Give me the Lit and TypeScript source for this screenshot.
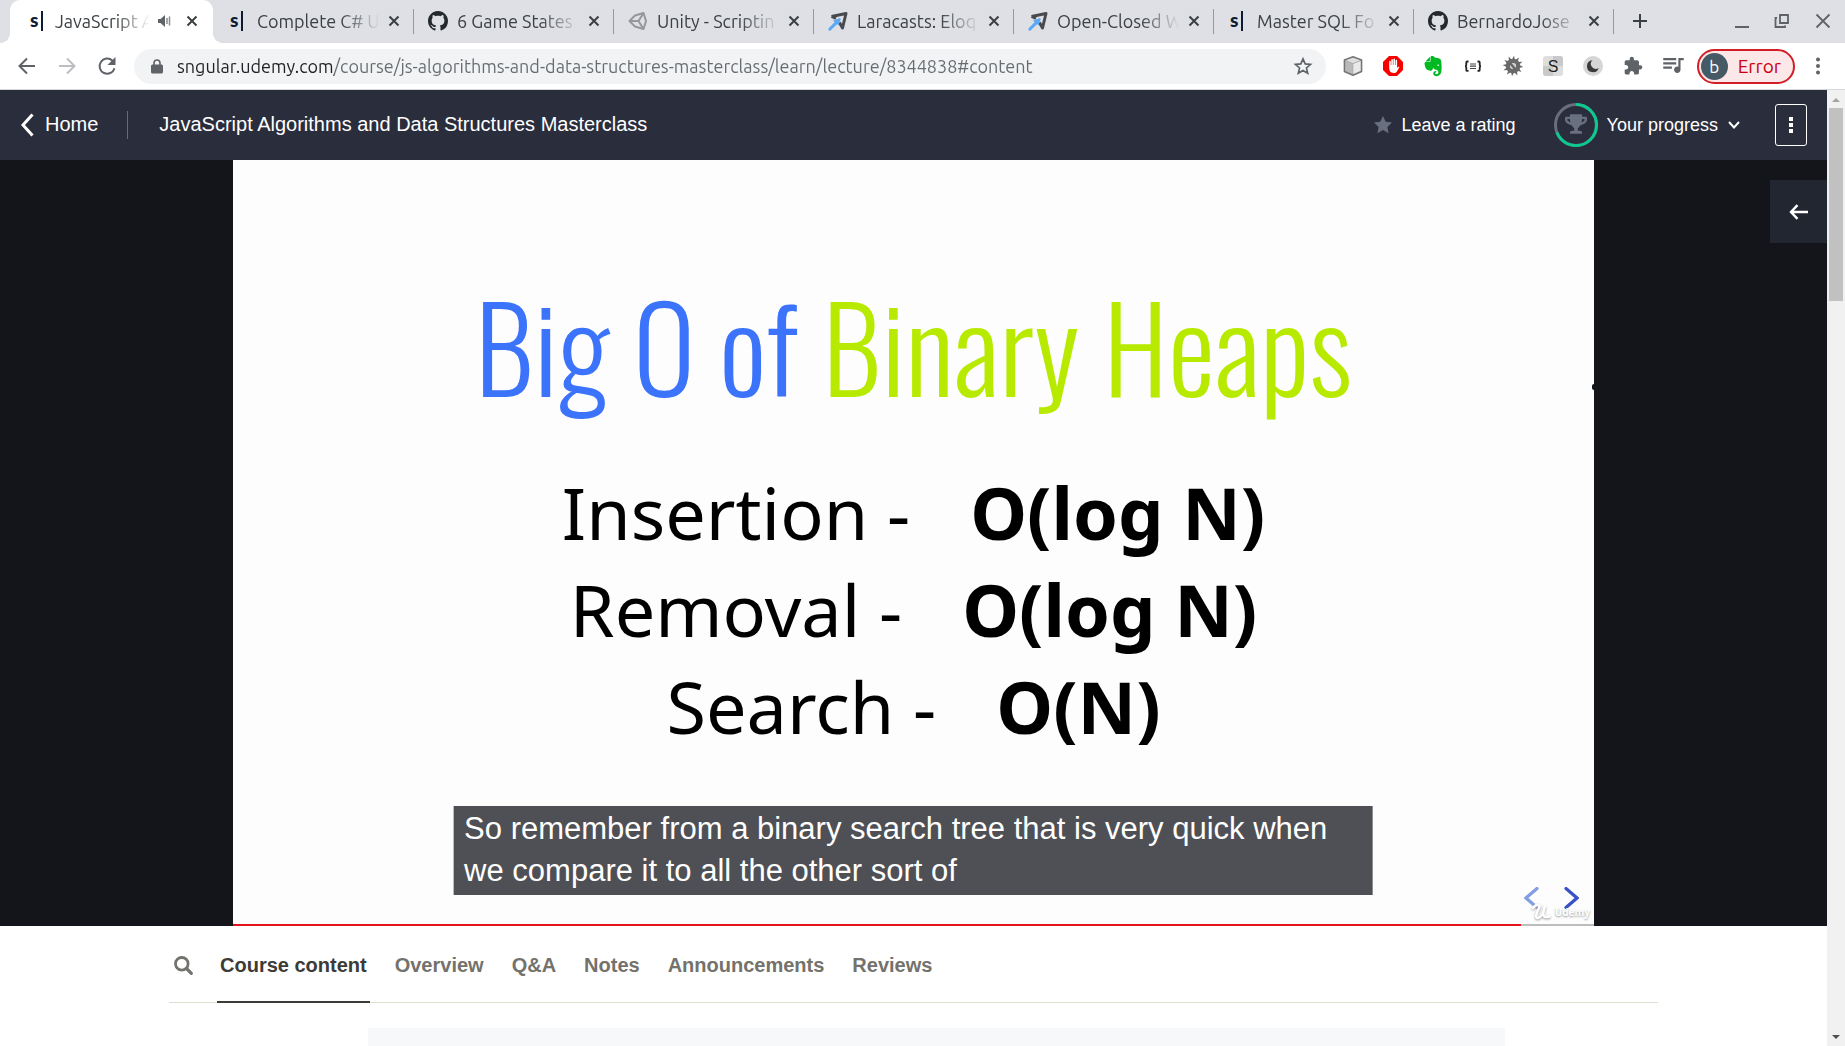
import { LitElement, html, css, svg, nothing, TemplateResult } from "lit";
import { customElement, state } from "lit/decorators.js";
import { classMap } from "lit/directives/class-map.js";

const githubMark = html`<svg class="favicon" viewBox="0 0 16 16" aria-hidden="true"><path fill="#24292e" d="M8 0C3.58 0 0 3.58 0 8c0 3.54 2.29 6.53 5.47 7.59.4.07.55-.17.55-.38 0-.19-.01-.82-.01-1.49-2.01.37-2.53-.49-2.69-.94-.09-.23-.48-.94-.82-1.13-.28-.15-.68-.52-.01-.53.63-.01 1.08.58 1.23.82.72 1.21 1.87.87 2.33.66.07-.52.28-.87.51-1.07-1.78-.2-3.64-.89-3.64-3.95 0-.87.31-1.59.82-2.15-.08-.2-.36-1.02.08-2.12 0 0 .67-.21 2.2.82.64-.18 1.32-.27 2-.27s1.36.09 2 .27c1.53-1.04 2.2-.82 2.2-.82.44 1.1.16 1.92.08 2.12.51.56.82 1.27.82 2.15 0 3.07-1.87 3.75-3.65 3.95.29.25.54.73.54 1.48 0 1.07-.01 1.93-.01 2.2 0 .21.15.46.55.38A8.01 8.01 0 0 0 16 8c0-4.42-3.58-8-8-8z"/></svg>`;
const unityMark = html`<svg class="favicon" viewBox="0 0 20 20" aria-hidden="true"><g fill="none" stroke="#96979a" stroke-width="2" stroke-linejoin="round"><path d="M7 4.500 15.500 2 18 10 15.500 18 7 15.500 1.500 10z"/><path d="M1.500 10H10.500M10.500 10 15.500 2M10.500 10 15.500 18"/></g></svg>`;
const laracastsMark = html`<svg class="favicon" viewBox="0 0 20 20" aria-hidden="true"><path d="M3.500 5.500 18 2.500 14.500 17 11.500 11.500M3.500 5.500 8 7.500" fill="none" stroke="#474a4f" stroke-width="3" stroke-linejoin="round"/><path d="M5 9.500 12.500 7 10.500 14.500" fill="#5aa9f5"/><path d="M11 9 1.800 18.200" stroke="#5aa9f5" stroke-width="3" stroke-dasharray="9 1.500" stroke-linecap="round"/></svg>`;
const sMark = html`<span class="favicon smark" aria-hidden="true">s</span>`;
const closeIcon = html`<svg width="12" height="12" viewBox="0 0 12 12" aria-hidden="true"><path d="M1.500 1.500 10.500 10.500M10.500 1.500 1.500 10.500" stroke="#3c4043" stroke-width="2"/></svg>`;

interface BrowserTab { title: string; mark: TemplateResult; active?: boolean; }

const browserTabs: BrowserTab[] = [
  { title: "JavaScript A", mark: sMark, active: true },
  { title: "Complete C# U", mark: sMark },
  { title: "6 Game States", mark: githubMark },
  { title: "Unity - Scriptin", mark: unityMark },
  { title: "Laracasts: Eloq", mark: laracastsMark },
  { title: "Open-Closed W", mark: laracastsMark },
  { title: "Master SQL Fo", mark: sMark },
  { title: "BernardoJose", mark: githubMark },
];

const gearTeeth = Array.from({ length: 12 }, (_, i) => i * 30);

const extensions: { label: string; art: TemplateResult }[] = [
  { label: "Package viewer", art: svg`<path d="M10 .8 18.600 4v11.500L10 19.300 1.400 15.500V4z" fill="#a9a9a9" stroke="#757575" stroke-width="1.500" stroke-linejoin="round"/><path d="M2.500 5 9.500 8v10L2.500 14.800z" fill="#b9b9b9"/><path d="M3 4.300 10 1.800l7 2.500-7 3z" fill="#dedede"/><path d="M10.300 8 17.600 5v9.800L10.300 18z" fill="#e9e9e9"/>` },
  { label: "Ad blocker", art: svg`<path d="M6 0h8l6 6v8l-6 6H6l-6-6V6z" fill="#f70000"/><path d="M6.200 11V5.800c0-1.300 1.600-1.300 1.600 0V9h.5V4c0-1.300 1.600-1.300 1.600 0v5h.5V3.400c0-1.300 1.600-1.300 1.600 0V9h.5V4.800c0-1.300 1.600-1.300 1.600 0V12c.7-1.200 1.600-1.700 2.300-1l-2.600 4.700c-1 1.600-5.400 1.700-6.600-.2C6.300 14 6.200 12.500 6.200 11z" fill="#fff"/>` },
  { label: "Note clipper", art: svg`<path transform="scale(.84)" fill="#00b821" d="M8.222 5.393c0 .239-.02.637-.256.895-.257.24-.652.259-.888.259H4.552c-.73 0-1.165 0-1.46.04-.159.02-.356.1-.455.14-.04.019-.04 0-.02-.02L8.380.796c.02-.02.04-.02.02.02-.04.099-.118.298-.138.457-.04.298-.04.736-.04 1.472v2.647zm5.348 17.869c-.67-.438-1.026-1.015-1.164-1.373a2.924 2.924 0 01-.217-1.095 3.007 3.007 0 013-3.004c.493 0 .888.398.888.895a.88.88 0 01-.454.776c-.099.06-.237.1-.336.12-.098.02-.473.06-.65.218-.198.16-.356.418-.356.697 0 .298.118.577.316.776.355.358.829.557 1.342.557a2.436 2.436 0 002.427-2.447c0-1.214-.809-2.290-1.875-2.766-.158-.08-.414-.14-.651-.2a8.040 8.040 0 00-.592-.1c-.829-.1-2.901-.755-3.040-2.605 0 0-.611 2.785-1.835 3.540-.118.06-.276.12-.454.16-.177.04-.374.06-.434.06-1.993.12-4.105-.517-5.565-2.030 0 0-.987-.815-1.500-3.103-.118-.558-.355-1.553-.493-2.488-.06-.338-.08-.597-.099-.836 0-.975.592-1.631 1.342-1.730h4.026c.69 0 1.086-.18 1.342-.42.336-.317.415-.775.415-1.312V1.354C9.050.617 9.703 0 10.669 0h.474c.197 0 .434.02.651.04.158.02.296.06.533.12 1.204.298 1.460 1.532 1.460 1.532s2.270.398 3.415.597c1.085.199 3.770.378 4.282 3.104 1.204 6.487.474 12.775.415 12.775-.849 6.129-5.901 5.830-5.901 5.830a4.100 4.100 0 01-2.428-.736zm4.540-13.034c-.652-.06-1.204.2-1.402.697-.04.1-.079.219-.059.278.02.06.06.08.099.1.237.12.631.179 1.204.239.572.06.967.1 1.223.06.04 0 .08-.02.119-.08.04-.06.02-.18.02-.28-.06-.536-.552-.934-1.204-1.014z"/>` },
  { label: "JSON formatter", art: svg`<path d="M5.500 5.500H4.300Q3.300 5.500 3.300 6.500V8.700Q3.300 10.200 2 10.200 3.300 10.200 3.300 11.700V13.900Q3.300 14.900 4.300 14.900H5.500M14.500 5.500h1.200q1 0 1 1v2.200q0 1.500 1.300 1.500-1.300 0-1.300 1.500v2.200q0 1-1 1h-1.200" fill="none" stroke="#222" stroke-width="1.800"/><path d="M7 8h6M7 10.200h6M7 12.500h6" stroke="#444" stroke-width="1.200"/>` },
  { label: "Bug tool", art: svg`<g fill="#666">${gearTeeth.map((a) => svg`<path d="M8.200 5 11 -.3l1.200 5.500z" transform="rotate(${a} 10 10)"/>`)}</g><circle cx="10" cy="10" r="5" fill="none" stroke="#6a6a6a" stroke-width="4.500"/><circle cx="10" cy="10" r="3" fill="#d4d4d4"/><path d="M7 7l5.500 6.500" stroke="#666" stroke-width="2.500"/>` },
  { label: "Stylish", art: svg`<rect width="20" height="20" rx="3" fill="#dedede"/><path d="M10 0h7a3 3 0 0 1 3 3v7H10zM0 10h10v10H3a3 3 0 0 1-3-3z" fill="#c9c9c9"/><text x="10" y="15.500" text-anchor="middle" font-size="16" fill="#222" font-family="Liberation Sans, sans-serif">S</text>` },
  { label: "Dark mode", art: svg`<circle cx="10" cy="10" r="10" fill="#d6d6d6"/><path d="M9.500 4.200A6 6 0 1 0 15.700 12 5 5 0 0 1 9.500 4.200z" fill="#3a3a3a"/>` },
  { label: "Extensions", art: svg`<path transform="scale(.84)" fill="#5f6368" d="M20.500 11H19V7c0-1.100-.9-2-2-2h-4V3.500C13 2.120 11.880 1 10.500 1S8 2.120 8 3.500V5H4c-1.100 0-1.990.9-1.990 2v3.800H3.500c1.490 0 2.700 1.210 2.700 2.700s-1.210 2.700-2.700 2.700H2V20c0 1.100.9 2 2 2h3.800v-1.500c0-1.490 1.210-2.700 2.700-2.700 1.490 0 2.700 1.210 2.700 2.700V22H17c1.100 0 2-.9 2-2v-4h1.500c1.380 0 2.500-1.120 2.500-2.500S21.880 11 20.500 11z"/>` },
  { label: "Media controls", art: svg`<path transform="translate(-3 -4.500) scale(1.080)" fill="#5f6368" d="M15 6H3v2h12V6zm0 4H3v2h12v-2zM3 16h8v-2H3v2zM17 6v8.180c-.31-.11-.65-.18-1-.18-1.660 0-3 1.340-3 3s1.340 3 3 3 3-1.340 3-3V8h3V6h-5z"/>` },
];

const slideRows = [
  { operation: "Insertion -", cost: "O(log N)" },
  { operation: "Removal -", cost: "O(log N)" },
  { operation: "Search -", cost: "O(N)" },
];

const sections = ["Course content", "Overview", "Q&A", "Notes", "Announcements", "Reviews"];

@customElement("browser-chrome")
class BrowserChrome extends LitElement {
  static styles = css`
    :host { display: block; font-family: "Ubuntu", "Noto Sans", sans-serif; color: #3c4043; }
    button { border: 0; padding: 0; background: none; display: flex; align-items: center; justify-content: center; font: inherit; color: inherit; }
    a { color: inherit; text-decoration: none; }
    svg { display: block; flex: none; overflow: visible; }
    .strip { display: flex; height: 43px; padding-left: 10px; background: #dee0e5; }
    .tab { display: flex; align-items: center; flex: 0 1 200px; box-sizing: border-box; min-width: 0; height: 43px; padding: 0 13px 1px 15px; position: relative; }
    .tab.active { flex: 0 1 203px; padding-left: 18px; padding-right: 15px; background: #fff; border-radius: 10px 10px 0 0; }
    .tab.active::before, .tab.active::after { content: ""; position: absolute; bottom: 0; width: 10px; height: 10px; }
    .tab.active::before { left: -10px; background: radial-gradient(circle at 0 0, #dee0e5 10px, #fff 10px); }
    .tab.active::after { right: -10px; background: radial-gradient(circle at 100% 0, #dee0e5 10px, #fff 10px); }
    .tab:not(.active)::after { content: ""; position: absolute; right: -1px; top: 9px; width: 1px; height: 25px; background: #96989d; }
    .favicon { width: 20px; height: 20px; flex: none; }
    .smark { box-sizing: border-box; width: 15px; margin-right: 5px; border-right: 2px solid #0b1c33; font: 900 19px/18px "Lato", sans-serif; color: #0b1c33; padding-left: 2px; }
    .title { flex: 1; min-width: 0; margin: 0 8px 0 9px; overflow: hidden; white-space: nowrap; font-size: 18px; line-height: 26px; mask-image: linear-gradient(to right, #000 calc(100% - 40px), transparent); }
    .active .title { margin: 0 8px 0 7px; mask-image: linear-gradient(to right, #000 calc(100% - 34px), transparent); }
    .audible { margin-right: 15px; }
    .plus { width: 54px; height: 42px; }
    .window { margin-left: auto; display: flex; align-items: center; gap: 24px; padding-right: 13px; height: 42px; }
    .bar { display: flex; align-items: center; height: 46px; background: #fff; border-bottom: 1px solid #d5d7dc; }
    .nav { display: flex; gap: 20px; padding: 0 17px 1px; }
    .omni { flex: 1; display: flex; align-items: center; height: 35px; border-radius: 18px; background: #f1f3f4; padding: 0 14px 0 17px; }
    .url { flex: 1; min-width: 0; border: 0; outline: 0; margin: 0 14px; padding: 0; height: 30px; font: 18px "Ubuntu", "Noto Sans", sans-serif; color: transparent; background: linear-gradient(to right, #202124 157px, #676b70 157px); -webkit-background-clip: text; background-clip: text; }
    .extensions { display: flex; gap: 20px; padding: 0 14px 0 17px; }
    .profile { height: 35px; box-sizing: border-box; border: 2px solid #d21e26; border-radius: 18px; background: #fce8e8; color: #c9000b; font-size: 19px; padding: 0 12px 0 2px; gap: 10px; }
    .avatar { width: 27px; height: 27px; border-radius: 50%; background: #455a64; color: #fff; font-size: 17px; line-height: 27px; }
    .more { width: 45px; margin-right: 5px; }
  `;

  render() {
    return html`
      <div class="strip">
        ${browserTabs.map((tab) => html`
          <div class=${classMap({ tab: true, active: !!tab.active })}>
            ${tab.mark}
            <a class="title" href="#content">${tab.title}</a>
            ${tab.active ? html`<svg class="audible" width="13" height="12" viewBox="0 0 13 12" aria-hidden="true"><path d="M0 4h2.500L7 0v12L2.500 8H0z" fill="#5f6368"/><path d="M9 3v6M11.500 1.500v9" stroke="#8a8d91" stroke-width="1.500"/></svg>` : nothing}
            <button aria-label="Close tab">${closeIcon}</button>
          </div>`)}
        <button class="plus" aria-label="New tab"><svg width="16" height="16" viewBox="0 0 16 16"><path d="M8 1v14M1 8h14" stroke="#3c4043" stroke-width="2"/></svg></button>
        <div class="window">
          <button aria-label="Minimize"><svg width="16" height="16" viewBox="0 0 16 16"><path d="M1 14h14" stroke="#5f6368" stroke-width="2"/></svg></button>
          <button aria-label="Restore"><svg width="16" height="16" viewBox="0 0 16 16"><path d="M6 2h8v8H6zM3 5H1.500v9H11v-1.500" fill="none" stroke="#5f6368" stroke-width="1.800"/></svg></button>
          <button aria-label="Close window"><svg width="18" height="16" viewBox="0 0 18 16"><path d="M2.500 1.500l13 13M15.500 1.500l-13 13" stroke="#5f6368" stroke-width="1.800"/></svg></button>
        </div>
      </div>
      <div class="bar">
        <div class="nav">
          <button aria-label="Back"><svg width="20" height="20" viewBox="0 0 20 20"><path d="M18 10H3M10 2.500 2.500 10l7.500 7.500" fill="none" stroke="#5f6368" stroke-width="2"/></svg></button>
          <button aria-label="Forward"><svg width="20" height="20" viewBox="0 0 20 20"><path d="M2 10h15M10 2.500 17.500 10 10 17.500" fill="none" stroke="#bcbec1" stroke-width="2"/></svg></button>
          <button aria-label="Reload"><svg width="20" height="20" viewBox="0 0 20 20"><path d="M17.500 12.200A7.600 7.600 0 1 1 15.300 4.500L17 6.500" fill="none" stroke="#5f6368" stroke-width="2"/><path d="M18.500 1v8h-8z" fill="#5f6368"/></svg></button>
        </div>
        <div class="omni">
          <svg width="12" height="15" viewBox="0 0 12 15" aria-hidden="true"><path d="M3 6V4a3 3 0 0 1 6 0v2" fill="none" stroke="#5f6368" stroke-width="1.600"/><rect y="5.500" width="12" height="9" rx="1.500" fill="#5f6368"/></svg>
          <input class="url" aria-label="Address" value="sngular.udemy.com/course/js-algorithms-and-data-structures-masterclass/learn/lecture/8344838#content">
          <button aria-label="Bookmark"><svg width="18" height="18" viewBox="0 0 24 24"><path d="M12 2.500l2.900 6.700 7.200.6-5.500 4.800 1.700 7.100-6.300-3.800-6.300 3.800 1.700-7.100L1.900 9.800l7.200-.6z" fill="none" stroke="#5f6368" stroke-width="2.200"/></svg></button>
        </div>
        <div class="extensions">
          ${extensions.map((ext) => html`<button aria-label=${ext.label}><svg width="20" height="20" viewBox="0 0 20 20">${ext.art}</svg></button>`)}
        </div>
        <button class="profile"><span class="avatar">b</span>Error</button>
        <button class="more" aria-label="Browser menu"><svg width="4" height="18" viewBox="0 0 4 18"><g fill="#5f6368"><circle cx="2" cy="2.500" r="2"/><circle cx="2" cy="9" r="2"/><circle cx="2" cy="15.500" r="2"/></g></svg></button>
      </div>`;
  }
}

@customElement("course-header")
class CourseHeader extends LitElement {
  static styles = css`
    :host { display: block; font: 18px "Liberation Sans", Arial, sans-serif; color: #fff; }
    button { border: 0; padding: 0; background: none; display: flex; align-items: center; font: inherit; color: inherit; }
    a { color: inherit; text-decoration: none; }
    svg { display: block; flex: none; }
    .header { display: flex; align-items: center; height: 70px; background: #2a2d3c; padding: 0 20px; }
    .home { display: flex; align-items: center; gap: 11px; font-size: 20px; padding-right: 29px; border-right: 1px solid #686a76; line-height: 28px; }
    .home span, .course { padding-bottom: 2px; line-height: 26px; }
    .course { font-size: 20px; font-weight: 400; margin: 0 auto 0 31px; }
    .rate { gap: 10px; margin-right: 38px; }
    .progress { gap: 9px; margin-right: 35px; }
    .progress .caret { margin-left: 1px; }
    .options { width: 32px; height: 42px; border: 1px solid #fff; border-radius: 3px; justify-content: center; box-sizing: border-box; }
  `;

  render() {
    return html`
      <header class="header">
        <a class="home" href="#home"><svg width="14" height="24" viewBox="0 0 14 24"><path d="M12.500 1.500 3 12l9.500 10.500" fill="none" stroke="#fff" stroke-width="3"/></svg><span>Home</span></a>
        <h1 class="course">JavaScript Algorithms and Data Structures Masterclass</h1>
        <button class="rate"><svg width="18" height="18" viewBox="0 0 18 18"><path d="M9 0l2.700 5.800 6.300.8-4.600 4.300 1.200 6.300L9 14.100l-5.600 3.100 1.200-6.300L0 6.600l6.300-.8z" fill="#686f7e"/></svg>Leave a rating</button>
        <button class="progress">
          <svg width="44" height="44" viewBox="0 0 44 44"><circle cx="22" cy="22" r="20.500" fill="none" stroke="#686f7e" stroke-width="3"/><circle cx="22" cy="22" r="20.500" fill="none" stroke="#0cca8f" stroke-width="3" pathLength="100" stroke-dasharray="69 31" transform="rotate(-90 22 22)"/><svg x="11" y="11" width="22" height="20" viewBox="0 0 576 512"><path fill="#686f7e" d="M552 64H448V24c0-13.300-10.700-24-24-24H152c-13.300 0-24 10.700-24 24v40H24C10.700 64 0 74.700 0 88v56c0 35.700 22.500 72.400 61.900 100.700 31.500 22.700 69.800 37.100 110 41.700C203.300 338.500 240 360 240 360v72h-48c-35.300 0-64 20.700-64 56v12c0 6.600 5.400 12 12 12h296c6.600 0 12-5.400 12-12v-12c0-35.300-28.700-56-64-56h-48v-72s36.700-21.500 68.100-73.600c40.300-4.600 78.600-19 110-41.700 39.300-28.300 61.900-65 61.900-100.700V88c0-13.300-10.700-24-24-24zM99.300 192.800C74.900 175.200 64 155.600 64 144v-16h64.200c1 32.600 5.800 61.200 12.800 86.200-15.100-5.200-29.200-12.400-41.700-21.400zM512 144c0 16.100-17.700 36.100-35.300 48.800-12.500 9-26.700 16.200-41.800 21.400 7-25 11.800-53.600 12.800-86.200H512v16z"/></svg></svg>
          Your progress
          <svg class="caret" width="12" height="8" viewBox="0 0 12 8"><path d="M1 1l5 5.500L11 1" fill="none" stroke="#fff" stroke-width="2"/></svg>
        </button>
        <button class="options" aria-label="Course options"><svg width="4" height="16" viewBox="0 0 4 16"><path d="M0 0h4v4H0zM0 6h4v4H0zM0 12h4v4H0z" fill="#fff"/></svg></button>
      </header>`;
  }
}

@customElement("lecture-player")
class LecturePlayer extends LitElement {
  static styles = css`
    :host { display: block; }
    button { border: 0; padding: 0; background: none; display: flex; align-items: center; justify-content: center; }
    svg { display: block; }
    .stage { position: relative; display: flex; justify-content: center; background: #14151a; }
    .slide { position: relative; box-sizing: border-box; width: 74.500%; aspect-ratio: 16 / 9; background: #fdfdfd; padding-top: 114px; text-align: center; color: #000; }
    .headline { margin: 0; font: 300 118px/140px "Oswald", "Roboto Condensed", "Liberation Sans Narrow", sans-serif; color: #b8ea00; white-space: nowrap; }
    .lead { color: #3b73fa; }
    .rows { margin: 50px 0 0; }
    .row { display: flex; justify-content: center; gap: 60px; font: 72px/97px "Noto Sans", sans-serif; white-space: nowrap; }
    .row dt, .row dd { margin: 0; }
    .row dd { font-weight: 700; }
    .caption { position: absolute; left: 50%; bottom: 31px; width: 67.500%; box-sizing: border-box; transform: translateX(-50%); margin: 0; padding: 2px 10px 3px; background: #4f5055; color: #fff; font: 31px/42px "Liberation Sans", Arial, sans-serif; text-align: left; }
    .pager { position: absolute; right: 15px; bottom: 17px; display: flex; gap: 25px; }
    .watermark { position: absolute; right: 4px; bottom: 6px; display: flex; align-items: center; gap: 4px; font: 700 10px/16px "Open Sans", sans-serif; color: #fff; text-shadow: 0 1px 2px #999; }
    .watermark svg { filter: drop-shadow(0 1px 1px #999); }
    .track { position: absolute; left: 0; right: 0; bottom: 0; height: 2px; background: #bdbdbd; }
    .played { height: 2px; background: #e3121b; }
    .speck { position: absolute; right: 0; top: 224px; width: 2px; height: 6px; border-radius: 2px 0 0 2px; background: #14151a; }
    .drawer { position: absolute; right: 0; top: 20px; width: 57px; height: 63px; background: #222631; }
  `;

  private played = 94.6;

  render() {
    return html`
      <section class="stage" aria-label="Lecture video">
        <div class="slide">
          <h2 class="headline"><span class="lead">Big O of</span> Binary Heaps</h2>
          <dl class="rows">
            ${slideRows.map((row) => html`<div class="row"><dt>${row.operation}</dt><dd>${row.cost}</dd></div>`)}
          </dl>
          <p class="caption">So remember from a binary search tree that is very quick when we compare it to all the other sort of</p>
          <div class="pager">
            <button aria-label="Previous slide"><svg width="15" height="22" viewBox="0 0 15 22"><path d="M13 1.500 2 11l11 9.500" fill="none" stroke="#829de4" stroke-width="3.200" stroke-linecap="round"/></svg></button>
            <button aria-label="Next slide"><svg width="15" height="22" viewBox="0 0 15 22"><path d="M2 1.500 13 11 2 20.500" fill="none" stroke="#3c50c6" stroke-width="3.200" stroke-linecap="round"/></svg></button>
          </div>
          <div class="watermark"><svg width="19" height="16" viewBox="0 0 19 16"><path d="M1 4C5-1 9 0 6.500 5 4 10 3 14 6 14 10 14 12 6 13 2 11 8 9 15 17.500 12.500" fill="none" stroke="#fff" stroke-width="2.500" stroke-linecap="round"/></svg>Udemy</div>
          <div class="speck"></div>
          <div class="track"><div class="played" style="width:${this.played}%"></div></div>
        </div>
        <button class="drawer" aria-label="Open sidebar"><svg width="20" height="16" viewBox="0 0 20 16"><path d="M19 8H2M8.500 1.200 2 8l6.500 6.800" fill="none" stroke="#fff" stroke-width="2.400"/></svg></button>
      </section>`;
  }
}

@customElement("course-sections")
class CourseSections extends LitElement {
  static styles = css`
    :host { display: block; }
    button { border: 0; background: none; padding: 0; margin: 0; }
    svg { display: block; }
    .sections { width: 81.500%; margin: 0 auto; display: flex; gap: 22px; border-bottom: 1px solid #dedfcf; height: 76px; }
    .search { padding: 4px 2px 0 5px; }
    .section { font: 700 20px/24px "Liberation Sans", Arial, sans-serif; color: #73726c; padding: 4px 3px 0; border-bottom: 2px solid transparent; margin-bottom: -1px; white-space: nowrap; }
    .section.current { color: #3c3b37; border-color: #3c3b37; }
    .panel { width: 62.200%; height: 80px; margin: 25px 0 0 20.150%; background: #f7f8fa; }
  `;

  @state() private current = sections[0];

  render() {
    return html`
      <nav class="sections" aria-label="Course sections">
        <button class="search" aria-label="Search course"><svg width="19" height="19" viewBox="0 0 19 19"><circle cx="7.800" cy="7.800" r="6.300" fill="none" stroke="#73726c" stroke-width="2.800"/><path d="M12.500 12.500 17.300 17.300" stroke="#73726c" stroke-width="3.200" stroke-linecap="round"/></svg></button>
        ${sections.map((name) => html`<button class=${classMap({ section: true, current: name === this.current })} @click=${() => (this.current = name)}>${name}</button>`)}
      </nav>
      <div class="panel"></div>`;
  }
}

@customElement("app-root")
class AppRoot extends LitElement {
  static styles = css`
    :host { display: flex; flex-direction: column; height: 100vh; overflow: hidden; background: #fff; }
    .viewport { flex: 1; min-height: 0; display: flex; }
    .page { flex: 1; min-width: 0; overflow: hidden; }
    .scroller { width: 18px; flex: none; display: flex; flex-direction: column; align-items: center; background: #f1f1f1; }
    .scroller svg { display: block; height: 18px; flex: none; }
    .rail { flex: 1; width: 14px; }
    .thumb { height: 21%; background: #c1c1c1; }
  `;

  render() {
    return html`
      <browser-chrome></browser-chrome>
      <div class="viewport">
        <main class="page">
          <course-header></course-header>
          <lecture-player></lecture-player>
          <course-sections></course-sections>
        </main>
        <div class="scroller" aria-hidden="true">
          <svg width="8" height="18" viewBox="0 0 8 18"><path d="M0 12l4-4 4 4z" fill="#a3a3a3"/></svg>
          <div class="rail"><div class="thumb"></div></div>
          <svg width="8" height="18" viewBox="0 0 8 18"><path d="M0 7l4 4 4-4z" fill="#505050"/></svg>
        </div>
      </div>`;
  }
}
